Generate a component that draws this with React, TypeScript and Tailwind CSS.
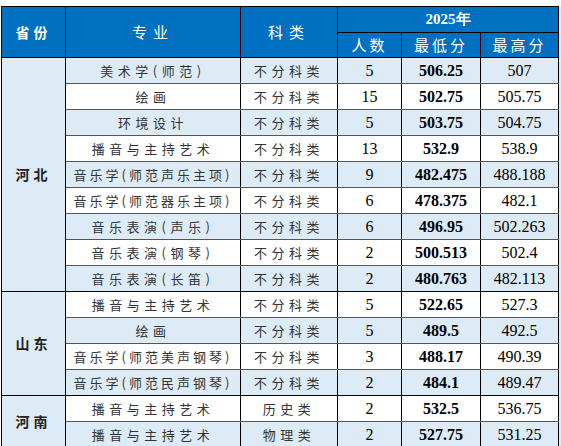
import React from "react";

type Row = { major: string; type: string; n: string; min: string; max: string };

const hebei: Row[] = [
  { major: "美术学(师范)", type: "不分科类", n: "5", min: "506.25", max: "507" },
  { major: "绘画", type: "不分科类", n: "15", min: "502.75", max: "505.75" },
  { major: "环境设计", type: "不分科类", n: "5", min: "503.75", max: "504.75" },
  { major: "播音与主持艺术", type: "不分科类", n: "13", min: "532.9", max: "538.9" },
  { major: "音乐学(师范声乐主项)", type: "不分科类", n: "9", min: "482.475", max: "488.188" },
  { major: "音乐学(师范器乐主项)", type: "不分科类", n: "6", min: "478.375", max: "482.1" },
  { major: "音乐表演(声乐)", type: "不分科类", n: "6", min: "496.95", max: "502.263" },
  { major: "音乐表演(钢琴)", type: "不分科类", n: "2", min: "500.513", max: "502.4" },
  { major: "音乐表演(长笛)", type: "不分科类", n: "2", min: "480.763", max: "482.113" },
];

const shandong: Row[] = [
  { major: "播音与主持艺术", type: "不分科类", n: "5", min: "522.65", max: "527.3" },
  { major: "绘画", type: "不分科类", n: "5", min: "489.5", max: "492.5" },
  { major: "音乐学(师范美声钢琴)", type: "不分科类", n: "3", min: "488.17", max: "490.39" },
  { major: "音乐学(师范民声钢琴)", type: "不分科类", n: "2", min: "484.1", max: "489.47" },
];

const henan: Row[] = [
  { major: "播音与主持艺术", type: "历史类", n: "2", min: "532.5", max: "536.75" },
  { major: "播音与主持艺术", type: "物理类", n: "2", min: "527.75", max: "531.25" },
];

const groups = [
  { name: "河北", rows: hebei },
  { name: "山东", rows: shandong },
  { name: "河南", rows: henan },
];

const cjk = "font-['Noto_Sans_CJK_SC',sans-serif]";
const num = "font-['Liberation_Serif',serif] text-[16px] text-black";

export default function App() {
  let idx = 0;
  return (
    <div className="w-[561px] h-[446px] overflow-hidden bg-white pt-[6px] pl-px">
      <table className="table-fixed border-collapse w-[561px]">
        <colgroup>
          <col className="w-[64px]" />
          <col className="w-[175px]" />
          <col className="w-[97px]" />
          <col className="w-[64px]" />
          <col className="w-[79px]" />
          <col className="w-[78px]" />
          <col className="w-[4px]" />
        </colgroup>
        <thead>
          <tr className="h-[26px] bg-[#0070c0] text-white">
            <th rowSpan={2} className={`border border-black ${cjk} text-[14px] font-bold tracking-[4px]`}>省份</th>
            <th rowSpan={2} className={`border border-black ${cjk} text-[15px] font-normal tracking-[6px]`}>专业</th>
            <th rowSpan={2} className={`border border-black ${cjk} text-[15px] font-normal tracking-[6px]`}>科类</th>
            <th colSpan={3} className="border border-black font-['Liberation_Serif',serif] text-[15px] font-bold">2025年</th>
            <th rowSpan={2} className="border-l border-black bg-[#ddebf7]"></th>
          </tr>
          <tr className="h-[25px] bg-[#0070c0] text-white">
            <th className={`border border-black ${cjk} text-[15px] font-normal tracking-[3px]`}>人数</th>
            <th className={`border border-black ${cjk} text-[15px] font-normal tracking-[3px]`}>最低分</th>
            <th className={`border border-black ${cjk} text-[15px] font-normal tracking-[3px]`}>最高分</th>
          </tr>
        </thead>
        <tbody>
          {groups.map((g) =>
            g.rows.map((r, i) => {
              idx += 1;
              const bg = idx % 2 === 1 ? "bg-[#ddebf7]" : "bg-white";
              const last = i === g.rows.length - 1;
              const bb = last ? "border-b-black" : "border-b-[#555]";
              return (
                <tr key={g.name + i} className={`h-[26px] ${bg}`}>
                  {i === 0 && (
                    <td
                      rowSpan={g.rows.length}
                      className={`border border-black bg-[#ddebf7] text-center ${cjk} text-[14px] font-bold tracking-[4px] text-[#222]`}
                    >
                      {g.name}
                    </td>
                  )}
                  <td className={`border-x border-x-black border-b ${bb} text-center ${cjk} text-[13px] text-[#333] ${r.major.length > 8 ? "tracking-[3px]" : "tracking-[4.5px]"} whitespace-nowrap`}>
                    {r.major}
                  </td>
                  <td className={`border-x border-x-black border-b ${bb} text-center ${cjk} text-[13px] text-[#333] tracking-[4.5px]`}>
                    {r.type}
                  </td>
                  <td className={`border-x border-x-black border-b ${bb} text-center ${num}`}>{r.n}</td>
                  <td className={`border-x border-x-black border-b ${bb} text-center ${num} font-bold`}>{r.min}</td>
                  <td className={`border-l border-l-[#777] border-r border-r-black border-b ${bb} text-center ${num}`}>{r.max}</td>
                  <td className="bg-[#ddebf7]"></td>
                </tr>
              );
            })
          )}
        </tbody>
      </table>
    </div>
  );
}
